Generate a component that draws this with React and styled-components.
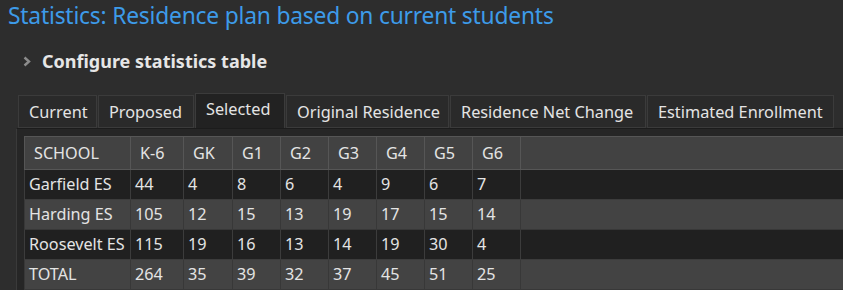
import React from "react";
import styled, { createGlobalStyle } from "styled-components";

const GlobalStyle = createGlobalStyle`
  html, body {
    margin: 0;
    padding: 0;
    background: #2d2d2d;
    overflow: hidden;
  }
  body {
    font-family: "Noto Sans", "Open Sans", sans-serif;
    color: #e2e2e2;
  }
`;

const Page = styled.div`
  width: 843px;
  height: 290px;
  overflow: hidden;
  display: flex;
  flex-direction: column;
`;

const Title = styled.h1`
  margin: 0;
  padding: 0 0 0 8px;
  height: 32px;
  line-height: 32px;
  font-size: 22.8px;
  font-weight: 400;
  letter-spacing: -0.2px;
  color: #3d9be9;
  white-space: nowrap;
`;

const Section = styled.div`
  display: flex;
  align-items: center;
  gap: 10px;
  padding: 16px 0 0 22px;
  height: 30px;
  font-size: 18px;
  font-weight: 700;
  color: #e6e6e6;
`;

const Chevron = styled.span`
  display: flex;
  color: #8c8c8c;
`;

const TabBar = styled.div`
  display: flex;
  gap: 1px;
  padding: 19px 0 0 18px;
  align-items: flex-end;
`;

const Tab = styled.div`
  box-sizing: border-box;
  width: ${(p) => p.w}px;
  height: ${(p) => (p.active ? 35 : 33)}px;
  line-height: ${(p) => (p.active ? 31 : 32)}px;
  padding-left: ${(p) => p.pad || 10}px;
  font-size: 16.3px;
  white-space: nowrap;
  background: ${(p) => (p.active ? "#222222" : "#2a2a2a")};
  border: 1px solid #3b3b3b;
  border-bottom: ${(p) => (p.active ? "none" : "1px solid #3b3b3b")};
  color: #e4e4e4;
`;

const Panel = styled.div`
  flex: 1;
  margin-left: 16px;
  background: #262626;
  border-left: 1px solid #3a3a3a;
  border-top: 1px solid #1c1c1c;
  padding: 7px 0 0 7px;
`;

const Grid = styled.table`
  border-collapse: collapse;
  table-layout: fixed;
  width: 820px;
  font-size: 16.2px;
`;

const Head = styled.th`
  box-sizing: border-box;
  height: 33px;
  padding: 0 0 0 ${(p) => p.pad}px;
  text-align: left;
  font-weight: 400;
  background: #424242;
  border: 1px solid #565656;
  color: #e4e4e4;
  white-space: nowrap;
`;

const Row = styled.tr`
  background: ${(p) => (p.dark ? "#202020" : "#434343")};
`;

const Cell = styled.td`
  box-sizing: border-box;
  height: 30px;
  padding: 0 0 1px 4px;
  border: 1px solid ${(p) => (p.dark ? "#3c3c3c" : "#383838")};
  color: #e4e4e4;
  white-space: nowrap;
  overflow: hidden;
`;

const tabs = [
  ["Current", 79],
  ["Proposed", 96],
  ["Selected", 90, true],
  ["Original Residence", 163],
  ["Residence Net Change", 196],
  ["Estimated Enrollment", 187],
];

const cols = [
  ["SCHOOL", 106, 9],
  ["K-6", 53, 9],
  ["GK", 49, 9],
  ["G1", 48, 9],
  ["G2", 48, 9],
  ["G3", 48, 9],
  ["G4", 48, 9],
  ["G5", 48, 9],
  ["G6", 48, 9],
];

const rows = [
  ["Garfield ES", 44, 4, 8, 6, 4, 9, 6, 7],
  ["Harding ES", 105, 12, 15, 13, 19, 17, 15, 14],
  ["Roosevelt ES", 115, 19, 16, 13, 14, 19, 30, 4],
  ["TOTAL", 264, 35, 39, 32, 37, 45, 51, 25],
];

const App = () => {
  return (
    <Page>
      <GlobalStyle />
      <Title>Statistics: Residence plan based on current students</Title>
      <Section>
        <Chevron>
          <svg width="10" height="13" viewBox="0 0 10 13">
            <path d="M2.5 2.5 L7 6.5 L2.5 10.5" stroke="currentColor" strokeWidth="2.4" fill="none" />
          </svg>
        </Chevron>
        Configure statistics table
      </Section>
      <TabBar>
        {tabs.map(([label, w, active]) => (
          <Tab key={label} w={w} active={active}>
            {label}
          </Tab>
        ))}
      </TabBar>
      <Panel>
        <Grid>
          <colgroup>
            {cols.map(([c, w]) => (
              <col key={c} style={{ width: w }} />
            ))}
            <col />
          </colgroup>
          <thead>
            <tr>
              {cols.map(([c, , pad]) => (
                <Head key={c} pad={pad}>{c}</Head>
              ))}
              <Head pad={0} />
            </tr>
          </thead>
          <tbody>
            {rows.map((r, i) => (
              <Row key={r[0]} dark={i % 2 === 0}>
                {r.map((v, j) => (
                  <Cell key={j} dark={i % 2 === 0}>{v}</Cell>
                ))}
                <Cell dark={i % 2 === 0} />
              </Row>
            ))}
          </tbody>
        </Grid>
      </Panel>
    </Page>
  );
};

export default App;
